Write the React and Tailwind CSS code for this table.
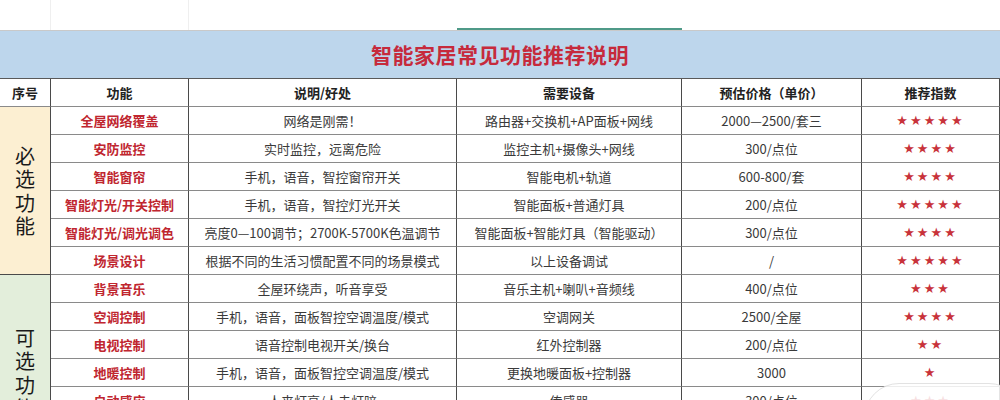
const groups = [
  {
    label: "必选功能",
    bg: "bg-[#fcefd2]",
    rows: [
      ["全屋网络覆盖", "网络是刚需！", "路由器+交换机+AP面板+网线", "2000—2500/套三", 5],
      ["安防监控", "实时监控，远离危险", "监控主机+摄像头+网线", "300/点位", 4],
      ["智能窗帘", "手机，语音，智控窗帘开关", "智能电机+轨道", "600-800/套", 4],
      ["智能灯光/开关控制", "手机，语音，智控灯光开关", "智能面板+普通灯具", "200/点位", 5],
      ["智能灯光/调光调色", "亮度0—100调节；2700K-5700K色温调节", "智能面板+智能灯具（智能驱动）", "300/点位", 4],
      ["场景设计", "根据不同的生活习惯配置不同的场景模式", "以上设备调试", "/", 5],
    ],
  },
  {
    label: "可选功能",
    bg: "bg-[#e3eedb]",
    rows: [
      ["背景音乐", "全屋环绕声，听音享受", "音乐主机+喇叭+音频线", "400/点位", 3],
      ["空调控制", "手机，语音，面板智控空调温度/模式", "空调网关", "2500/全屋", 4],
      ["电视控制", "语音控制电视开关/换台", "红外控制器", "200/点位", 2],
      ["地暖控制", "手机，语音，面板智控空调温度/模式", "更换地暖面板+控制器", "3000", 1],
      ["自动感应", "人来灯亮/人走灯暗", "传感器", "300/点位", 3],
      ["智能门锁", "指纹，密码，远程开锁", "智能门锁", "2000/套", 3],
      ["智能晾衣架", "手机，语音，升降控制", "智能晾衣架", "1500/套", 2],
    ],
  },
];

const cols = "grid grid-cols-[51px_138px_268px_225px_180px_138px]";
const cell = "flex items-center justify-center border-r border-b border-r-[#4a4a4a] border-b-[#8a8a8a] whitespace-nowrap";

function Stars({ n }) {
  return (
    <span className="text-[13px] tracking-[2px] text-[#c8323a] font-['DejaVu_Sans',sans-serif]">
      {"★".repeat(n)}
    </span>
  );
}

export default function App() {
  return (
    <div className="relative w-[1000px] h-[400px] overflow-hidden bg-white font-['Noto_Sans_CJK_SC','Liberation_Serif',serif] text-[13px] text-[#3a3a3a]">
      {/* top strip */}
      <div className={`${cols} h-[31px] border-b border-[#c9c9c9]`}>
        <div className="border-r border-[#efefef]" />
        <div className="border-r border-[#efefef]" />
        <div />
        <div className="flex items-end">
          <div className="h-[2px] w-full bg-[#4f9a88]" />
        </div>
        <div />
        <div />
      </div>

      {/* title */}
      <div className="h-[48px] bg-[#bdd6ec] border-b border-[#5a5a5a] flex items-center justify-center text-[21px] font-bold tracking-[0.5px] text-[#c62a3c]">
        智能家居常见功能推荐说明
      </div>

      {/* header */}
      <div className={`${cols} h-[28px] font-bold text-[13px] text-[#222]`}>
        {["序号", "功能", "说明/好处", "需要设备", "预估价格（单价）", "推荐指数"].map((h) => (
          <div key={h} className={`${cell} border-b-[#4a4a4a]`}>
            {h}
          </div>
        ))}
      </div>

      {/* body */}
      {groups.map((g) => (
        <div key={g.label} className={`${cols} auto-rows-[28px]`}>
          <div
            className={`${g.bg} flex items-center justify-center border-r border-b border-[#4a4a4a] text-[#1a1a1a]`}
            style={{ gridRow: `span ${g.rows.length}` }}
          >
            <p className="w-[20px] text-[20px] leading-[23.5px] break-all text-center">{g.label}</p>
          </div>
          {g.rows.map((r) => (
            <div key={r[0]} className="contents">
              <div className={`${cell} font-bold text-[#c0262f]`}>{r[0]}</div>
              <div className={cell}>{r[1]}</div>
              <div className={cell}>{r[2]}</div>
              <div className={cell}>{r[3]}</div>
              <div className={cell}>
                <Stars n={r[4]} />
              </div>
            </div>
          ))}
        </div>
      ))}

      {/* watermark */}
      <div className="absolute left-[864px] top-[383px] w-[160px] h-[70px] rounded-[35px] bg-white/85 border border-[#e2e2e2]" />
    </div>
  );
}
